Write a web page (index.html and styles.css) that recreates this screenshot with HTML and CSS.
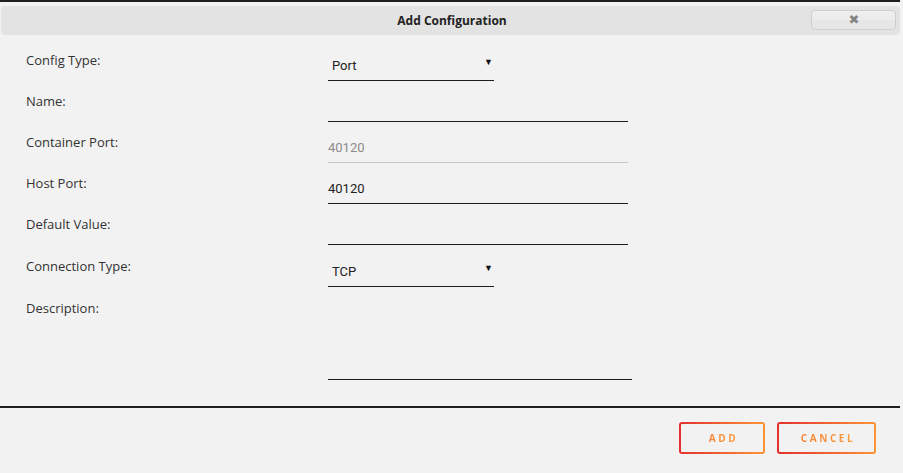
FILE: index.html
```html
<!DOCTYPE html>
<html lang="en">
<head>
<meta charset="utf-8">
<title>Add Configuration</title>
<link rel="stylesheet" href="styles.css">
</head>
<body>
<div class="dialog">
  <div class="header">
    <div class="title">Add Configuration</div>
    <button class="close" type="button" aria-label="Close">&#10006;</button>
  </div>

  <form class="form">
    <div class="row">
      <label class="label">Config Type:</label>
      <div class="field select short"><span>Port</span><span class="caret">&#9660;</span></div>
    </div>
    <div class="row">
      <label class="label">Name:</label>
      <div class="field"></div>
    </div>
    <div class="row">
      <label class="label">Container Port:</label>
      <div class="field disabled"><span>40120</span></div>
    </div>
    <div class="row">
      <label class="label">Host Port:</label>
      <div class="field"><span>40120</span></div>
    </div>
    <div class="row">
      <label class="label">Default Value:</label>
      <div class="field"></div>
    </div>
    <div class="row row-shift">
      <label class="label">Connection Type:</label>
      <div class="field select short"><span>TCP</span><span class="caret">&#9660;</span></div>
    </div>
    <div class="row row-tall">
      <label class="label">Description:</label>
      <div class="field textarea"></div>
    </div>
  </form>

  <div class="footer">
    <button class="btn btn-add" type="button"><span>ADD</span></button>
    <button class="btn btn-cancel" type="button"><span>CANCEL</span></button>
  </div>
</div>
</body>
</html>
```

FILE: styles.css
```css
html, body {
  margin: 0;
  padding: 0;
  background: #f2f2f2;
}

body {
  font-family: "Open Sans", "Noto Sans", sans-serif;
  color: #333;
}

.dialog {
  border-top: 2px solid #1e1e1e;
  margin-right: 3px;
  height: 471px;
  background: #f2f2f2;
}

/* title bar */
.header {
  position: relative;
  margin: 4px 0 0 1px;
  height: 29px;
  background: #e3e3e3;
  border-radius: 4px;
  display: flex;
  align-items: center;
  justify-content: center;
}

.title {
  font-size: 12px;
  font-weight: 700;
  color: #222;
  line-height: 16px;
  margin-left: 3px;
}

.close {
  position: absolute;
  right: 4px;
  top: 4px;
  width: 85px;
  height: 20px;
  border: 1px solid #cfcfcf;
  border-radius: 4px;
  background: linear-gradient(to bottom, #efefef 0%, #ececec 50%, #e6e6e6 51%, #e6e6e6 100%);
  color: #858585;
  font-size: 13px;
  line-height: 18px;
  padding: 0 0 0 1px;
  font-family: "DejaVu Sans", sans-serif;
}

/* form rows */
.form {
  margin: 9px 0 0;
}

.row {
  display: flex;
  height: 41px;
}

.row-shift {
  margin-top: 1px;
}

.row-tall {
  height: auto;
  margin-top: 1px;
}

.label {
  width: 302px;
  padding: 8px 0 0 26px;
  font-size: 13px;
  line-height: 17px;
  color: #333;
}

.field {
  width: 300px;
  height: 36px;
  border-bottom: 1px solid #1e1e1e;
  box-sizing: content-box;
  font-family: Roboto, "Open Sans", sans-serif;
  font-size: 13px;
  color: #222;
  display: flex;
  align-items: flex-end;
}

.field span {
  line-height: 16px;
  padding-bottom: 6px;
}

.field.disabled {
  border-bottom-color: #c8c8c8;
  color: #8c8c8c;
}

.select.short {
  width: 166px;
  justify-content: space-between;
}

.select span:first-child {
  padding-left: 4px;
}

.caret {
  font-size: 9px;
  color: #111;
  padding-right: 1px;
  padding-bottom: 10px !important;
}

.textarea {
  width: 304px;
  height: 87px;
}

/* action buttons */
.footer {
  margin-top: 26px;
  border-top: 2px solid #1e1e1e;
  display: flex;
  justify-content: flex-end;
  gap: 12px;
  padding: 14px 24px 0 0;
}

.btn {
  height: 32px;
  border: 2px solid transparent;
  border-radius: 3px;
  background:
    linear-gradient(#f2f2f2, #f2f2f2) padding-box,
    linear-gradient(to right, #e4302e, #fd9437) border-box;
  font-family: "Open Sans", sans-serif;
  font-weight: 700;
  font-size: 10px;
  letter-spacing: 2.6px;
  padding: 0;
  cursor: pointer;
}

.btn span {
  background: linear-gradient(to right, #f58338, #fd9a3b);
  -webkit-background-clip: text;
  background-clip: text;
  color: transparent;
  padding-left: 3px;
}

.btn-add {
  width: 86px;
}

.btn-cancel {
  width: 99px;
}
```
